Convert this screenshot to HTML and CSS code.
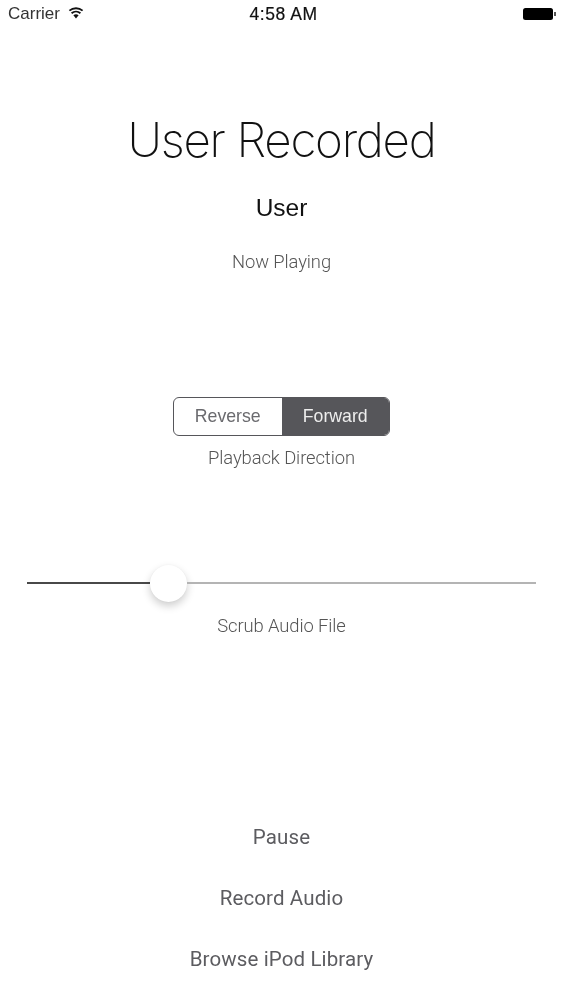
FILE: index.html
```html
<!DOCTYPE html>
<html lang="en">
<head>
<meta charset="utf-8">
<title>User Recorded</title>
<link rel="stylesheet" href="styles.css">
</head>
<body>
<div class="screen">
  <header class="status">
    <div class="status-left">
      <span>Carrier</span>
      <svg class="wifi" viewBox="0 0 16 12" width="18" height="13"><path d="M8 11.5 5.6 8.6a3.6 3.6 0 0 1 4.8 0z" fill="#111"/><path d="M3.9 6.7a6.3 6.3 0 0 1 8.2 0M1.9 4.3a9.4 9.4 0 0 1 12.2 0" fill="none" stroke="#111" stroke-width="1.7"/></svg>
    </div>
    <div class="status-time">4:58 AM</div>
    <div class="status-right"><span class="battery"></span><span class="battery-tip"></span></div>
  </header>
  <h1 class="title">User Recorded</h1>
  <div class="artist">User</div>
  <div class="caption now">Now Playing</div>
  <div class="segments">
    <div class="segment">Reverse</div>
    <div class="segment active">Forward</div>
  </div>
  <div class="caption direction">Playback Direction</div>
  <div class="slider">
    <div class="track-done"></div>
    <div class="thumb"></div>
    <div class="track-left"></div>
  </div>
  <div class="caption scrub">Scrub Audio File</div>
  <nav class="actions">
    <div class="action">Pause</div>
    <div class="action">Record Audio</div>
    <div class="action">Browse iPod Library</div>
  </nav>
</div>
</body>
</html>
```
FILE: styles.css
```css
* { box-sizing: border-box; }
html, body { margin: 0; background: #fff; }
.screen {
  width: 563px; height: 1000px; overflow: hidden;
  display: flex; flex-direction: column; align-items: center;
  font-family: Roboto, "Liberation Sans", sans-serif; color: #111;
  will-change: opacity;
}
.status {
  width: 100%; height: 28px; padding: 0 7px 0 8px;
  display: grid; grid-template-columns: 1fr auto 1fr; align-items: center;
  font-family: "Liberation Sans", sans-serif; font-size: 17px; color: #333;
}
.status-left { display: flex; align-items: center; gap: 7px; }
.wifi { margin-top: -3px; }
.status-time { margin-left: 3px; font-size: 17.5px; letter-spacing: .55px; color: #111; -webkit-text-stroke: .2px #111; }
.status-right { display: flex; justify-content: flex-end; align-items: center; }
.battery { width: 30px; height: 12px; background: #000; border-radius: 2.5px; }
.battery-tip { width: 2px; height: 4px; background: #555; margin-left: 1px; }
.title {
  margin: 86px 0 0; height: 52px; line-height: 52px;
  font-family: Inter, sans-serif; font-weight: 150; font-size: 47.5px; letter-spacing: -1.3px; color: #111;
}
.artist { margin-top: 27px; height: 30px; line-height: 30px; font-family: "Liberation Sans", sans-serif; font-size: 24.5px; color: #111; }
.caption { font-family: Roboto, sans-serif; font-weight: 300; font-size: 18.4px; color: #555; height: 26px; line-height: 26px; letter-spacing: -.1px; }
.now { margin-top: 26px; }
.segments {
  margin-top: 122px; width: 217px; height: 39px; display: flex;
  border: 1.5px solid #56565a; border-radius: 6px; overflow: hidden;
  font-family: "Liberation Sans", sans-serif; font-size: 17.7px;
}
.segment { flex: 1; display: flex; align-items: center; justify-content: center; color: #6a6a6e; }
.segment.active { background: #56565a; color: #eee; }
.direction { margin-top: 9px; }
.slider { margin-top: 90px; width: 509px; height: 44px; display: flex; align-items: center; }
.track-done { width: 123px; height: 2px; background: #484848; }
.thumb { width: 37px; height: 37px; border-radius: 50%; background: #fff; flex: none; box-shadow: 0 4px 9px rgba(0,0,0,.2), 0 0 2px rgba(0,0,0,.06); }
.track-left { flex: 1; height: 2px; background: #b4b4b4; }
.scrub { margin-top: 8px; }
.actions { margin-top: 183px; display: flex; flex-direction: column; align-items: center; gap: 31px; }
.action { height: 30px; line-height: 30px; font-family: Roboto, sans-serif; font-size: 20.5px; letter-spacing: .12px; color: #5c5c60; }
```
